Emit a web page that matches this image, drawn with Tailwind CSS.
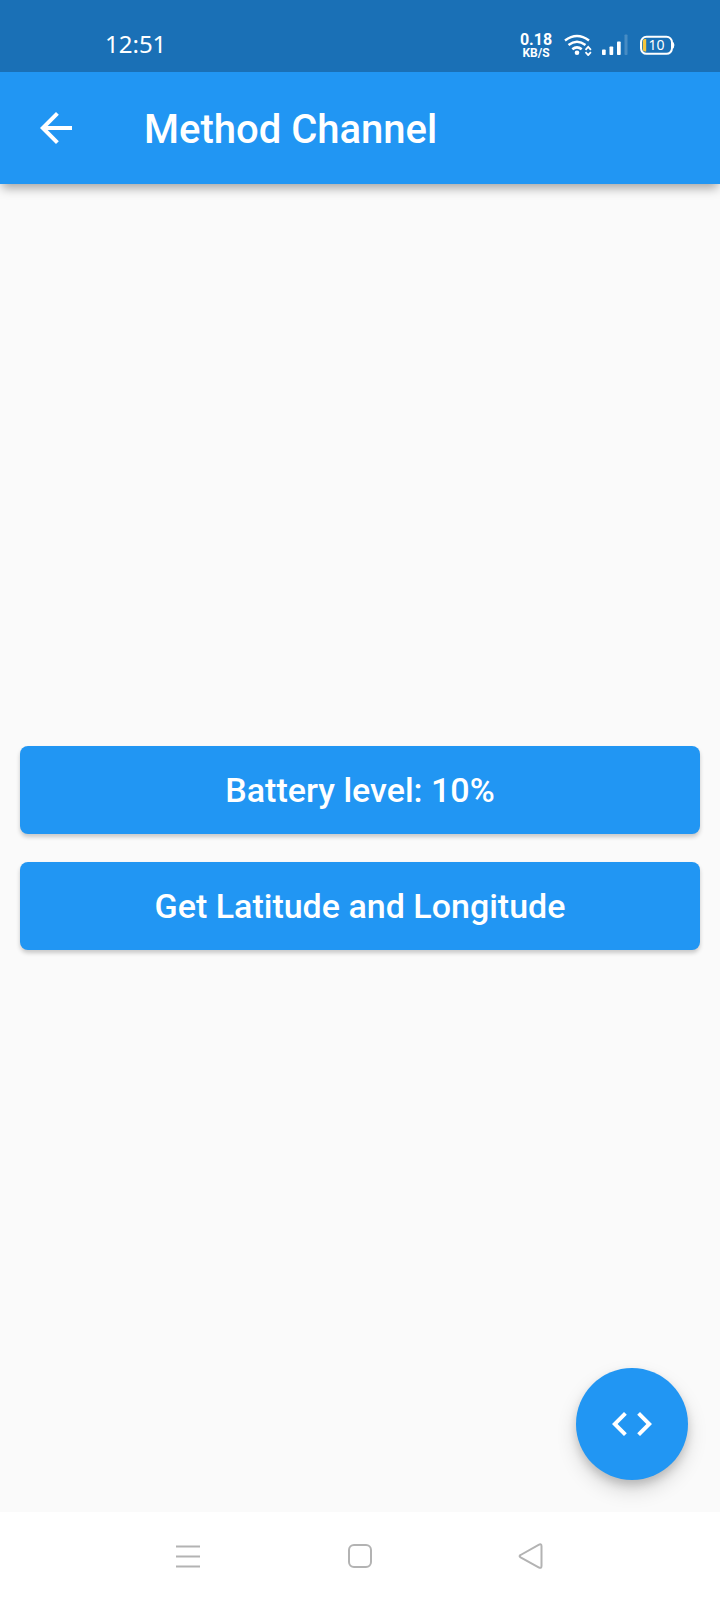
<!DOCTYPE html>
<html lang="en">
<head>
<meta charset="utf-8">
<title>Method Channel</title>
<script src="https://cdn.jsdelivr.net/npm/@tailwindcss/browser@4"></script>
</head>
<body class="bg-[#fafafa]">
<div class="relative flex h-[1600px] w-[720px] flex-col overflow-hidden font-['Roboto',sans-serif] text-white">
  <header class="z-10 bg-[#2196f3] shadow-[0_6px_10px_-2px_rgba(0,0,0,0.35)]">
    <div class="flex h-18 items-start bg-[#1a70b6] pl-[105px]">
      <div class="mt-[28px] w-[399px] font-['Noto_Sans',sans-serif] text-[24px] leading-[32px]">12:51</div>
      <div class="mt-[33px] ml-[12px] flex w-10 flex-col items-center font-bold">
        <span class="text-[16px] leading-[14px]">0.18</span>
        <span class="text-[12px] leading-[12px]">KB/S</span>
      </div>
      <svg class="mt-8 ml-2 h-6 w-[116px]" viewBox="564 32 116 24" fill="none">
        <g stroke="#fff" stroke-width="2.5">
          <path d="M565 40.5Q577 31.500 589 40.500M568.500 45Q577 38.500 585.500 45M572.300 49.300Q577 45.500 581.700 49.300"/>
        </g>
        <circle cx="577" cy="52.800" r="2.300" fill="#fff"/>
        <path d="M585.500 49.800l2.700-2.900 2.700 2.900M585.500 52.200l2.700 2.900 2.700-2.900" stroke="#fff" stroke-width="1.800"/>
        <g fill="#fff">
          <rect x="602" y="49.500" width="3.700" height="5.500" rx=".8"/>
          <rect x="609.500" y="46.500" width="3.700" height="8.500" rx=".8"/>
          <rect x="617" y="41.500" width="3.700" height="13.500" rx=".8"/>
          <rect x="624.500" y="34.500" width="3" height="20.500" rx=".8" opacity=".2"/>
        </g>
        <rect x="641" y="36.800" width="31" height="17" rx="5.500" stroke="#fff" stroke-width="2"/>
        <path d="M673 42.500q1.500 2.800 0 5.600" stroke="#fff" stroke-width="1.500"/>
        <path d="M646.200 39v12.600h-1.200q-2.200 0-2.200-2v-8.600q0-2 2.200-2z" fill="#f5c53c"/>
        <text x="656.500" y="50" text-anchor="middle" fill="#fff" font-family="Noto Sans, sans-serif" font-size="14">10</text>
      </svg>
    </div>
    <div class="flex h-28 items-center pl-8">
      <svg class="size-12" viewBox="0 0 24 24" fill="#fff"><path d="M20 11H7.830l5.590-5.590L12 4l-8 8 8 8 1.410-1.410L7.830 13H20v-2z"/></svg>
      <h1 class="ml-16 pt-1 text-[40px] leading-[48px] font-medium">Method Channel</h1>
    </div>
  </header>
  <main class="flex flex-1 flex-col gap-7 px-5 pt-[562px]">
    <button class="h-22 rounded-lg bg-[#2196f3] pt-px text-[34px] font-medium shadow-[0_3px_4px_rgba(0,0,0,0.2)]">Battery level: 10%</button>
    <button class="h-22 rounded-lg bg-[#2196f3] pt-px text-[34px] font-medium shadow-[0_3px_4px_rgba(0,0,0,0.2)]">Get Latitude and Longitude</button>
  </main>
  <button class="absolute right-8 bottom-[120px] flex size-28 items-center justify-center rounded-full bg-[#2196f3] shadow-[0_10px_20px_rgba(0,0,0,0.15),0_5px_9px_rgba(0,0,0,0.15)]">
    <svg class="size-12" viewBox="0 0 24 24" fill="#fff"><path d="M9.400 16.600L4.800 12l4.600-4.600L8 6l-6 6 6 6 1.400-1.400zm5.200 0l4.600-4.600-4.600-4.600L16 6l6 6-6 6-1.400-1.400z"/></svg>
  </button>
  <nav class="z-10 flex h-22 items-center justify-between bg-white px-[174px]">
    <svg class="size-7" viewBox="0 0 28 28" stroke="#b3b3b3" stroke-width="2"><path d="M2 4.500h24M2 14.500h24M2 24.500h24"/></svg>
    <svg class="size-7" viewBox="0 0 28 28" fill="none" stroke="#b3b3b3" stroke-width="2"><rect x="3" y="3" width="22" height="22" rx="5"/></svg>
    <svg class="size-7" viewBox="0 0 28 28" fill="none" stroke="#b3b3b3" stroke-width="2"><path d="M2.600 13L20.600 2.800Q23.500 1.300 23.500 4.200V24Q23.500 26.900 20.600 25.300L2.600 15.300Q.6 14.100 2.600 13z"/></svg>
  </nav>
</div>
</body>
</html>
